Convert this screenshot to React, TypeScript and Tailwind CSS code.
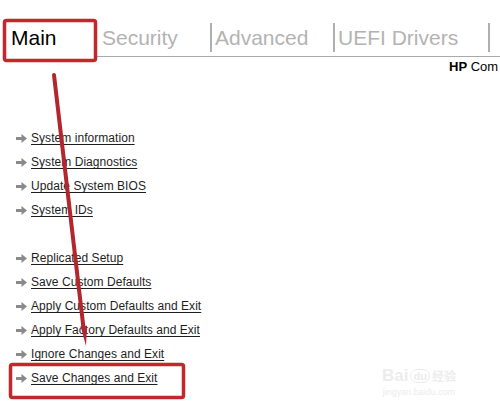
import React from "react";

const groups = [
  ["System information", "System Diagnostics", "Update System BIOS", "System IDs"],
  [
    "Replicated Setup",
    "Save Custom Defaults",
    "Apply Custom Defaults and Exit",
    "Apply Factory Defaults and Exit",
    "Ignore Changes and Exit",
    "Save Changes and Exit",
  ],
];

function Bullet() {
  return (
    <svg width="11" height="9" viewBox="0 0 11 9" className="shrink-0">
      <path d="M0 3h5.5V0L11 4.5 5.5 9V6H0z" fill="#8a8a8a" />
    </svg>
  );
}

function MenuItem({ label }: { label: string }) {
  return (
    <div className="flex h-[24px] items-center pl-[16px]">
      <Bullet />
      <a href="#" className="ml-[4px] text-[12px] tracking-[0.05px] text-[#1e1e1e] underline underline-offset-[2px]">
        {label}
      </a>
    </div>
  );
}

export default function App() {
  return (
    <div
      className="relative h-[414px] w-[500px] overflow-hidden bg-white"
      style={{ fontFamily: '"Liberation Sans", Arial, sans-serif' }}
    >
      {/* tab strip */}
      <div className="flex pt-[23px]">
        <div className="flex h-[29px] w-[97px] items-center pl-[11px] text-[21px] leading-[29px] text-black">
          Main
        </div>
        <div className="flex flex-1 border-b border-[#a9a9a9] pb-[4px] text-[21px] leading-[29px] text-[#b3b3b3]">
          <div className="h-[29px] w-[113px] pl-[5px]">Security</div>
          <div className="h-[29px] w-[123px] border-l-2 border-[#b0b0b0] pl-[3px]">Advanced</div>
          <div className="h-[29px] w-[155px] border-l-2 border-[#b0b0b0] pl-[3px]">UEFI Drivers</div>
          <div className="h-[29px] flex-1 border-l-2 border-[#b0b0b0]" />
        </div>
      </div>

      <div className="mt-[2px] whitespace-nowrap pl-[449px] text-[13px] leading-[15px] text-black">
        <span className="font-bold">HP</span> Com
      </div>

      {/* menu */}
      <div className="mt-[52px] flex flex-col gap-[24px]">
        {groups.map((g, i) => (
          <div key={i} className="flex flex-col">
            {g.map((label) => (
              <MenuItem key={label} label={label} />
            ))}
          </div>
        ))}
      </div>

      {/* watermark */}
      <div className="pointer-events-none absolute left-[382px] top-[366px] flex flex-col items-center text-[#ececec]">
        <div className="flex items-center text-[17px] font-bold leading-[20px]">
          <span>Bai</span>
          <span className="mx-[2px] rounded-full border border-[#ececec] px-[2px] text-[11px] leading-[12px]">du</span>
          <span className="text-[12px]" style={{ fontFamily: '"Noto Sans CJK SC", sans-serif' }}>经验</span>
        </div>
        <div className="text-[9px] leading-[12px]">jingyan.baidu.com</div>
      </div>

      {/* red annotations */}
      <svg className="pointer-events-none absolute left-0 top-0" width="500" height="414">
        <rect x="4.5" y="20.5" width="91" height="40" rx="2" fill="none" stroke="#c1272d" strokeWidth="3.5" />
        <rect x="10.5" y="364.5" width="173" height="33" rx="2" fill="none" stroke="#c1272d" strokeWidth="3.5" />
        <line x1="54" y1="75" x2="83.5" y2="328" stroke="#b3262c" strokeWidth="4" strokeLinecap="round" />
        <polygon points="80.5,326 87,326 86,346" fill="#b3262c" />
      </svg>
    </div>
  );
}
